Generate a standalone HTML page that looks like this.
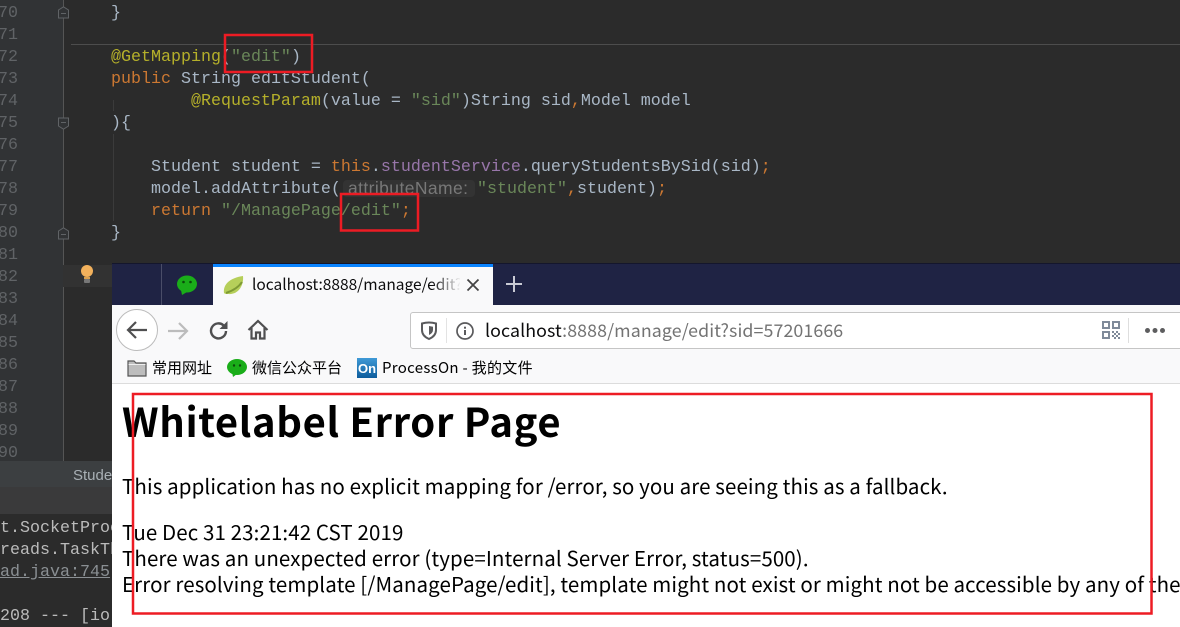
<!DOCTYPE html>
<html><head><meta charset="utf-8">
<style>
html,body{margin:0;padding:0;background:#2b2b2b}
#r{position:relative;width:1180px;height:627px;overflow:hidden;background:#2b2b2b}
#r div,#r svg,#r span.a{position:absolute}
.c{font:16.67px/22px "Liberation Mono",monospace;color:#a9b7c6;white-space:pre;left:111px}
.n{font:16.67px/22px "Liberation Mono",monospace;color:#606366;white-space:pre;left:-2px}
.k{color:#cc7832}.s{color:#6a8759}.m{color:#b5b02a}.p{color:#9876aa}.g{color:#787878}
.b{font-family:"Noto Sans CJK SC","Liberation Sans",sans-serif;white-space:pre;color:#000}
</style></head><body><div id="r">

<div style="left:0;top:0;width:63px;height:461px;background:#313335"></div>
<div style="left:63px;top:0;width:1px;height:461px;background:#555"></div>
<div style="left:71px;top:44px;width:1109px;height:1px;background:#4d4d4d"></div>
<div style="left:63px;top:265px;width:49px;height:22px;background:#323232"></div>

<div class="n" style="top:1px;margin-top:2px">70</div>
<div class="n" style="top:25px">71</div>
<div class="n" style="top:47px">72</div>
<div class="n" style="top:69px">73</div>
<div class="n" style="top:91px">74</div>
<div class="n" style="top:113px">75</div>
<div class="n" style="top:135px">76</div>
<div class="n" style="top:157px">77</div>
<div class="n" style="top:179px">78</div>
<div class="n" style="top:201px">79</div>
<div class="n" style="top:223px">80</div>
<div class="n" style="top:245px">81</div>
<div class="n" style="top:267px">82</div>
<div class="n" style="top:289px">83</div>
<div class="n" style="top:311px">84</div>
<div class="n" style="top:333px">85</div>
<div class="n" style="top:355px">86</div>
<div class="n" style="top:377px">87</div>
<div class="n" style="top:399px">88</div>
<div class="n" style="top:421px">89</div>
<div class="n" style="top:443px">90</div>

<svg style="left:57px;top:6px" width="13" height="13" viewBox="0 0 13 13"><path d="M1.500 12V4L6.500 .8 11.500 4V12Z" fill="#313335" stroke="#606366"/><path d="M4 7.500H9" stroke="#606366"/></svg>
<svg style="left:57px;top:117px" width="13" height="13" viewBox="0 0 13 13"><path d="M1.500 1V9L6.500 12.200 11.500 9V1Z" fill="#313335" stroke="#606366"/><path d="M4 5.500H9" stroke="#606366"/></svg>
<svg style="left:57px;top:227px" width="13" height="13" viewBox="0 0 13 13"><path d="M1.500 12V4L6.500 .8 11.500 4V12Z" fill="#313335" stroke="#606366"/><path d="M4 7.500H9" stroke="#606366"/></svg>

<div style="left:113px;top:100px;width:1px;height:11px;background:#3b3b3b"></div>
<div style="left:113px;top:134px;width:1px;height:87px;background:#3b3b3b"></div>

<div class="c" style="top:3px">}</div>
<div class="c" style="top:47px"><span class="m">@GetMapping</span>(<span class="s">"edit"</span>)</div>
<div class="c" style="top:69px"><span class="k">public</span> String editStudent(</div>
<div class="c" style="top:91px">        <span class="m">@RequestParam</span>(value = <span class="s">"sid"</span>)String sid<span class="k">,</span>Model model</div>
<div class="c" style="top:113px">){</div>
<div class="c" style="top:157px">    Student student = <span class="k">this</span>.<span class="p">studentService</span>.queryStudentsBySid(sid)<span class="k">;</span></div>
<div style="left:343px;top:180px;width:132px;height:17px;background:#333;border-radius:4px"></div>
<div class="c" style="top:179px">    model.addAttribute(</div>
<div class="g" style="left:348px;top:177px;font:17.500px/22px 'Liberation Sans',sans-serif;color:#787878;white-space:pre;letter-spacing:.4px">attributeName:</div>
<div class="c" style="top:179px;left:477px"><span class="s">"student"</span><span class="k">,</span>student)<span class="k">;</span></div>
<div class="c" style="top:201px">    <span class="k">return</span> <span class="s">"/ManagePage/edit"</span><span class="k">;</span></div>
<div class="c" style="top:223px">}</div>

<svg style="left:79px;top:264px" width="16" height="20" viewBox="0 0 16 20"><circle cx="8" cy="7" r="6" fill="#f2b15c"/><rect x="5" y="13" width="6" height="2" fill="#d9a050"/><rect x="5" y="15" width="6" height="4" rx="1" fill="#777"/></svg>

<div style="left:0;top:461px;width:112px;height:166px;background:#2b2b2b"></div>
<div style="left:0;top:461px;width:112px;height:26px;background:#3c3f41"></div>
<div style="left:0;top:487px;width:112px;height:27px;background:#3a3a3b"></div>
<div style="left:73px;top:465px;font:15px/22px 'Liberation Sans',sans-serif;color:#a9b0b5;white-space:pre">Stude</div>
<div class="c" style="left:0;top:518px;color:#bbb">t.SocketProc</div>
<div class="c" style="left:0;top:540px;color:#bbb">reads.TaskTh</div>
<div class="c" style="left:0;top:562px;color:#8a8f93;text-decoration:underline">ad.java:745</div>
<div class="c" style="left:0;top:606px;color:#bbb">208 --- [io-</div>

<div style="left:112px;top:263px;width:1068px;height:364px;background:#fff"></div>
<div style="left:112px;top:263px;width:1068px;height:42px;background:#1f2344"></div>
<div style="left:112px;top:263px;width:1068px;height:1px;background:#14162c"></div>
<div style="left:161px;top:264px;width:1px;height:41px;background:#4a4d68"></div>
<svg style="left:176px;top:275px" width="22" height="20" viewBox="0 0 22 20"><ellipse cx="11" cy="9" rx="10" ry="8.500" fill="#1aad19"/><path d="M5 15L6 20 11 17Z" fill="#1aad19"/><circle cx="7.500" cy="7" r="1.300" fill="#0b4a0b"/><circle cx="14.500" cy="7" r="1.300" fill="#0b4a0b"/></svg>

<div style="left:213px;top:264px;width:280px;height:41px;background:#f9f9fa"></div>
<div style="left:213px;top:264px;width:280px;height:3px;background:#0a84ff"></div>
<svg style="left:223px;top:274px" width="22" height="22" viewBox="0 0 22 22"><path d="M1 19C0 10 7 4 20 2 21 12 15 21 5 20 3 20 2 20 1 19Z" fill="#b6cf5a"/><path d="M3 19C9 17 15 14 19 8" stroke="#7e9a34" stroke-width="2" fill="none"/></svg>
<div class="b" style="left:252px;top:273px;font-size:15.500px;line-height:23px;color:#0c0c0d;width:208px;overflow:hidden">localhost:8888/manage/edit?</div>
<div style="left:432px;top:270px;width:29px;height:30px;background:linear-gradient(90deg,rgba(249,249,250,0),#f9f9fa)"></div>
<svg style="left:466px;top:278px" width="14" height="14" viewBox="0 0 14 14"><path d="M1.500 1.500L12.500 12.500M12.500 1.500L1.500 12.500" stroke="#444" stroke-width="1.800"/></svg>
<svg style="left:505px;top:275px" width="18" height="18" viewBox="0 0 18 18"><path d="M9 1V17M1 9H17" stroke="#c9cad4" stroke-width="2"/></svg>

<div style="left:112px;top:305px;width:1068px;height:78px;background:#f9f9fa"></div>
<div style="left:112px;top:383px;width:1068px;height:1px;background:#dcdcdc"></div>

<svg style="left:116px;top:309px" width="44" height="44" viewBox="0 0 44 44"><circle cx="21" cy="21" r="20.500" fill="#fff" stroke="#bbb"/><path d="M31 21H12M20 13L12 21 20 29" fill="none" stroke="#4f4f50" stroke-width="2.200"/></svg>
<svg style="left:167px;top:320px" width="22" height="22" viewBox="0 0 22 22"><path d="M1 11H20M12 3L20 11 12 19" fill="none" stroke="#bcbcbc" stroke-width="2.200"/></svg>
<svg style="left:208px;top:320px" width="22" height="22" viewBox="0 0 22 22"><path d="M18 11A7.500 7.500 0 1 1 15.500 5.300" fill="none" stroke="#4f4f50" stroke-width="2.400"/><path d="M19.500 1V9H11.500Z" fill="#4f4f50"/></svg>
<svg style="left:247px;top:319px" width="22" height="22" viewBox="0 0 22 22"><path d="M1.500 11L11 2 20.500 11M4.500 9V19.500H9V13.500H13V19.500H17.500V9" fill="none" stroke="#4f4f50" stroke-width="2.200"/></svg>

<div style="left:410px;top:312px;width:780px;height:37px;box-sizing:border-box;background:#fff;border:1px solid #c5c5c5;border-radius:3px"></div>
<svg style="left:420px;top:321px" width="18" height="20" viewBox="0 0 18 20"><path d="M2 2.500Q9 .5 16 2.500V9Q16 15 9 18 2 15 2 9Z" fill="none" stroke="#5a5a5c" stroke-width="2"/><path d="M9 5L13 5.800V9Q13 12 9 14Z" fill="#5a5a5c"/></svg>
<div style="left:446px;top:318px;width:1px;height:25px;background:#e3e3e3"></div>
<svg style="left:455px;top:321px" width="20" height="20" viewBox="0 0 20 20"><circle cx="10" cy="10" r="8" fill="none" stroke="#5a5a5c" stroke-width="1.700"/><rect x="9" y="9" width="2" height="5" fill="#5a5a5c"/><rect x="9" y="5.700" width="2" height="2" fill="#5a5a5c"/></svg>
<div class="b" style="left:485px;top:317px;font-size:17.800px;line-height:26px;color:#0c0c0d;letter-spacing:.1px">localhost<span style="color:#737373">:8888/manage/edit?sid=57201666</span></div>

<svg style="left:1102px;top:321px" width="18" height="18" viewBox="0 0 18 18" fill="#7f8a99"><path d="M0 0H8V8H0ZM2 2V6H6V2Z" fill-rule="evenodd"/><path d="M10 0H18V8H10ZM12 2V6H16V2Z" fill-rule="evenodd"/><path d="M0 10H8V18H0ZM2 12V16H6V12Z" fill-rule="evenodd"/><path d="M10 10h2v2h-2zM14 10h2v2h-2zM12 12h2v2h-2zM16 12h2v2h-2zM10 14h2v2h-2zM14 14h2v2h-2zM12 16h2v2h-2zM16 16h2v2h-2z"/></svg>
<div style="left:1128px;top:318px;width:1px;height:25px;background:#dedede"></div>
<svg style="left:1144px;top:327px" width="22" height="7" viewBox="0 0 22 7" fill="#5d5d5f"><circle cx="3.500" cy="3.500" r="2.500"/><circle cx="11" cy="3.500" r="2.500"/><circle cx="18.500" cy="3.500" r="2.500"/></svg>

<svg style="left:127px;top:359px" width="20" height="18" viewBox="0 0 20 18"><path d="M1 2H7L9 4H19V17H1Z" fill="#bdbdbd" stroke="#555" stroke-width="1.200"/><path d="M1.500 5.500H18.500" stroke="#eee"/></svg>
<div class="b" style="left:152px;top:357px;font-size:15px;line-height:21px">常用网址</div>
<svg style="left:227px;top:359px" width="20" height="18" viewBox="0 0 20 18"><ellipse cx="10" cy="8" rx="10" ry="8" fill="#1aad19"/><path d="M5 13L6 18 10 15Z" fill="#1aad19"/><circle cx="7" cy="6.500" r="1.200" fill="#0b4a0b"/><circle cx="13" cy="6.500" r="1.200" fill="#0b4a0b"/></svg>
<div class="b" style="left:252px;top:357px;font-size:15px;line-height:21px">微信公众平台</div>
<div style="left:357px;top:358px;width:20px;height:20px;background:linear-gradient(#3f9ad6,#0d5c9c);color:#fff;font:bold 13px/21px 'Liberation Sans',sans-serif;text-align:center">On</div>
<div class="b" style="left:382px;top:357px;font-size:15px;line-height:21px;letter-spacing:.3px">ProcessOn - 我的文件</div>

<div class="b" id="h" style="left:122px;top:392px;font-size:40px;line-height:56px;font-weight:700;letter-spacing:.62px">Whitelabel Error Page</div>
<div class="b" style="left:122px;top:470px;font-size:20.500px;line-height:30px;letter-spacing:.11px">This application has no explicit mapping for /error, so you are seeing this as a fallback.</div>
<div class="b" style="left:122px;top:516px;font-size:20.500px;line-height:30px;letter-spacing:.11px">Tue Dec 31 23:21:42 CST 2019</div>
<div class="b" style="left:122px;top:542px;font-size:20.500px;line-height:30px;letter-spacing:.11px">There was an unexpected error (type=Internal Server Error, status=500).</div>
<div class="b" style="left:122px;top:568px;font-size:20.500px;line-height:30px;letter-spacing:.11px">Error resolving template [/ManagePage/edit], template might not exist or might not be accessible by any of the configured Template Resolvers</div>

<svg style="left:0;top:0" width="1180" height="627" fill="none" stroke="#ed1c24" stroke-width="2.500"><rect x="225" y="35" width="87" height="37"/><rect x="341" y="194" width="77" height="36.500"/><rect x="133" y="394" width="1018.500" height="219.500"/></svg>
</div></body></html>
